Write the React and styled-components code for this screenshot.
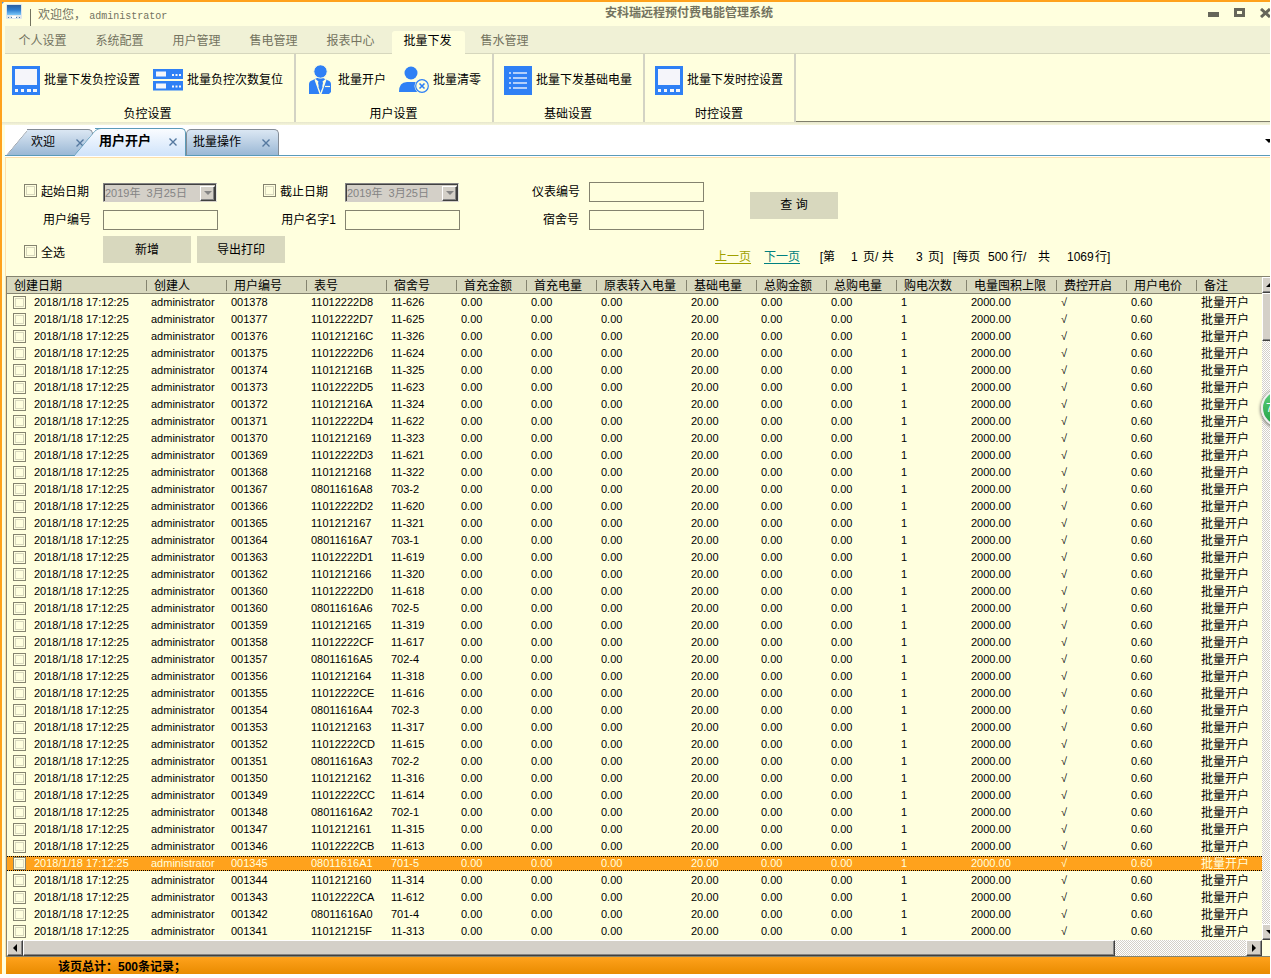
import React from "react";
import styled, { createGlobalStyle, css } from "styled-components";

const GlobalStyle = createGlobalStyle`
  * {
    box-sizing: border-box;
  }
  body {
    margin: 0;
    background: #fff;
    color: #000;
    font-family: "Liberation Sans", "Noto Sans CJK SC", sans-serif;
    font-size: 12px;
    line-height: 16px;
  }
  button, input {
    font: inherit;
    color: inherit;
    margin: 0;
    padding: 0;
    border: 0;
    border-radius: 0;
  }
  svg {
    display: block;
    flex: none;
  }
`;

const Window = styled.div`
  position: relative;
  margin: 0 1px 4px 0;
  border-top: 2px solid #ffa21c;
  border-left: 2px solid #ffa21c;
  background: #ffffde;
  overflow: hidden;
`;

/* title bar */

const TitleBar = styled.header`
  display: grid;
  grid-template-columns: 602fr auto 496fr;
  height: 24px;
  color: #73735f;
`;

const Welcome = styled.div`
  display: flex;
  align-items: flex-start;
  padding: 2px 0 0 4px;
`;

const WelcomeText = styled.div`
  margin: 5px 0 0 8px;
  padding-left: 7px;
  border-left: 1px solid #73735f;
  height: 17px;
  line-height: 12px;
  white-space: pre;
`;

const UserName = styled.span`
  font-family: "Liberation Mono", monospace;
  font-size: 10px;
`;

const AppTitle = styled.h1`
  margin: 0;
  font-size: 12px;
  line-height: 23px;
  font-weight: bold;
`;

const WindowButtons = styled.div`
  display: flex;
  justify-content: flex-end;
  align-items: flex-start;
  gap: 15px;
  padding-top: 6px;
  margin-right: -1px;
`;

const WindowButton = styled.button`
  width: 11px;
  height: 10px;
  background: none;
`;

/* ribbon */

const MenuTabs = styled.nav`
  display: flex;
  align-items: flex-end;
  gap: 4px;
  height: 28px;
  margin-left: 3px;
  padding-left: 2px;
  background: #f0f1d6;
  border-bottom: 1px solid #d6d7bd;
`;

const MenuTab = styled.button`
  width: 73px;
  height: 23px;
  margin-bottom: -1px;
  padding: 0 2px 4px 0;
  line-height: 18px;
  background: none;
  color: #73735f;
  border-radius: 3px 3px 0 0;

  ${({ $active }) => $active && css`
    background: #ffffde;
    color: #000;
  `}
`;

const Ribbon = styled.div`
  display: flex;
  height: 68px;
`;

const RibbonGroup = styled.section`
  display: flex;
  flex-direction: column;
  justify-content: space-between;
  padding: 11px 11px 0 10px;
  border-right: 2px solid #d3d3c4;
`;

const RibbonItems = styled.div`
  display: flex;
  gap: 13px;
`;

const RibbonButton = styled.button`
  display: flex;
  align-items: center;
  gap: 4px;
  height: 30px;
  background: none;
  white-space: nowrap;
`;

const GroupName = styled.div`
  text-align: center;
  line-height: 16px;
`;

const RibbonRest = styled.div`
  flex: 1;
  border-bottom: 1px solid #807f6c;
`;

const RibbonShadow = styled.div`
  height: 3px;
  background: linear-gradient(#e6e6cc, #f6f6dc);
`;

/* document tabs */

const DocTabs = styled.div`
  position: relative;
  z-index: 0;
  display: flex;
  align-items: flex-end;
  height: 31px;
  margin-left: 3px;
  background: #fff;
  border-bottom: 1px solid #5b9bb8;
`;

const DocTab = styled.div`
  position: relative;
  display: flex;
  align-items: center;
  justify-content: space-between;
  width: ${({ $width }) => $width}px;
  height: 26px;
  padding: 0 8px 1px ${({ $slant }) => ($slant ? 4 : 6)}px;
  margin-left: ${({ $slant }) => $slant || 0}px;
  border: 1px solid #848c96;
  border-width: 1px 1px 0 ${({ $slant }) => ($slant ? 0 : 1)}px;
  border-radius: ${({ $slant }) => ($slant ? 0 : 5)}px 5px 0 0;
  background: linear-gradient(#dbe7f3, #9bb8d5);

  ${({ $active }) => $active && css`
    z-index: 1;
    height: 28px;
    margin-bottom: -1px;
    padding-bottom: 3px;
    border-color: #5b9bb8;
    background: linear-gradient(#fafcff, #cfe3fa);
    font-size: 13px;
    font-weight: bold;
  `}

  ${({ $slant }) => $slant && css`
    &::before {
      content: "";
      position: absolute;
      z-index: -1;
      top: -1px;
      bottom: 0;
      left: -10px;
      width: 22px;
      border: inherit;
      border-width: 1px 0 0 1px;
      border-top-left-radius: 5px;
      background: inherit;
      transform: skewX(-40deg);
    }
  `}
`;

const TabClose = styled.button`
  width: 8px;
  height: 8px;
  margin-top: 2px;
  background: none;
`;

const TabsMenu = styled.button`
  align-self: center;
  width: 5px;
  height: 6px;
  margin-left: auto;
  background: none;
  overflow: hidden;
`;

/* filters */

const Content = styled.main`
  margin-left: 3px;
  border-top: 1px solid #fff;
`;

const Panel = styled.div`
  border-top: 1px solid #fde0ab;
  border-left: 1px solid #fde0ab;
`;

const Filters = styled.form`
  display: grid;
  grid-template-columns: 79px 115px 45px 82px 115px 72px 57px 115px 46px 88px;
  grid-template-rows: 20px 20px;
  row-gap: 8px;
  align-items: center;
  padding: 24px 0 0 18px;
`;

const FieldLabel = styled.label`
  grid-column: ${({ $col }) => $col};
  padding-right: ${({ $pad }) => $pad || 12}px;
  text-align: right;
  white-space: nowrap;
`;

const CheckBox = styled.input.attrs({ type: "checkbox" })`
  appearance: none;
  flex: none;
  width: 13px;
  height: 13px;
  border: 1px solid #84836f;
  background: #ffffde;
  outline: 1px solid #d8d8be;
  outline-offset: -3px;

  &:checked {
    background: #84836f;
  }
`;

const CheckLabel = styled.label`
  grid-column: ${({ $col }) => $col};
  display: flex;
  align-items: center;
  gap: 4px;
  white-space: nowrap;

  ${CheckBox} {
    margin-bottom: 3px;
  }
`;

const TextBox = styled.input`
  grid-column: ${({ $col }) => $col};
  width: 115px;
  height: 20px;
  padding: 0 3px;
  border: 1px solid #84836f;
  background: #ffffde;
`;

const DatePicker = styled.div`
  grid-column: ${({ $col }) => $col};
  display: flex;
  width: 114px;
  height: 19px;
  border: 1px solid #848484;
  border-color: #848484 #e8e8e0 #d4d0c8 #848484;
  box-shadow: inset 1px 1px #404040, inset -1px 0 #404040;
  background: #d4d0c8;
  padding: 2px 1px 1px 1px;
`;

const DateText = styled.input`
  flex: 1;
  min-width: 0;
  background: none;
  color: #848484;
  font-size: 11px;
  white-space: pre;
`;

const bevel = css`
  background: #d4d0c8;
  border: 1px solid;
  border-color: #fff #404040 #404040 #fff;
  box-shadow: inset -1px -1px #848484;
`;

const DateButton = styled.button`
  ${bevel};
  display: grid;
  place-items: center;
  width: 15px;
  height: 15px;
`;

const PushButton = styled.button`
  width: 88px;
  height: 27px;
  background: #d8d8be;
  white-space: pre;
`;

const SearchButton = styled(PushButton)`
  grid-column: 10;
  grid-row: 1 / span 2;
  align-self: center;
  margin-bottom: 2px;
`;

const Actions = styled.div`
  display: flex;
  align-items: flex-start;
  height: 46px;
  padding: 6px 0 0 18px;
`;

const SelectAll = styled(CheckLabel)`
  width: 79px;
  height: 34px;
`;

const ActionButtons = styled.div`
  display: flex;
  gap: 6px;
`;

const Pager = styled.div`
  display: flex;
  margin: 12px 0 0 430px;
  line-height: 18px;
  white-space: pre;
`;

const PageLink = styled.a`
  width: 49px;
  color: ${({ $disabled }) => ($disabled ? "#a0a000" : "#008080")};
  text-decoration: underline;
  text-underline-offset: 2px;
`;

const PagerText = styled.span`
  width: ${({ $width }) => $width}px;
`;

/* grid */

const GridBox = styled.div`
  border: 1px solid #84836f;
  border-width: 0 0 1px 1px;
`;

const GridBody = styled.div`
  display: flex;
`;

const Table = styled.table`
  flex: 1;
  width: 0;
  table-layout: fixed;
  border-collapse: separate;
  border-spacing: 0;
`;

const HeadCell = styled.th`
  height: 18px;
  padding: 3px 0 0 7px;
  border: 1px solid #84836f;
  border-width: 1px 0;
  background: linear-gradient(#84836f, #84836f) right 3px / 1px 11px no-repeat #d8d8be;
  line-height: 13px;
  font-weight: normal;
  text-align: left;
  white-space: nowrap;

  &:last-child {
    background: #d8d8be;
  }
`;

const Row = styled.tr`
  ${({ $selected }) => $selected && css`
    color: #ffffde;
    background:
      repeating-linear-gradient(90deg, #000 0 1px, #ffa21c 1px 2px) 0 1px / 100% 1px no-repeat,
      repeating-linear-gradient(90deg, #000 0 1px, #ffa21c 1px 2px) 0 15px / 100% 1px no-repeat,
      linear-gradient(#ffa21c, #ffa21c) 0 1px / 100% 15px no-repeat;
  `}
`;

const Cell = styled.td`
  height: 17px;
  padding: 0 0 0 4px;
  font-size: 11px;
  line-height: 17px;
  white-space: nowrap;
  overflow: hidden;
`;

const NoteCell = styled(Cell)`
  padding-top: 1px;
  font-size: 12px;
  line-height: 16px;
`;

const DateCell = styled.label`
  display: flex;
  align-items: center;
  gap: 8px;
  height: 17px;
  padding-left: 2px;
`;

const track = css`
  background: repeating-conic-gradient(#d4d0c8 0 25%, #fff 0 50%) 0 0 / 2px 2px;
`;

const VScroll = styled.div`
  ${track};
  display: flex;
  flex-direction: column;
  width: 8px;
  overflow: hidden;
  border-top: 1px solid #84836f;
`;

const HScroll = styled.div`
  ${track};
  display: flex;
  height: 16px;
  margin-right: 8px;
`;

const ScrollButton = styled.button`
  ${bevel};
  display: grid;
  place-items: center;
  flex: none;
  width: 16px;
  height: 16px;

  &:last-child {
    margin-top: auto;
  }
`;

const VThumb = styled.div`
  ${bevel};
  width: 16px;
  height: 48px;
`;

const HThumb = styled.div`
  ${bevel};
  width: 87%;
  margin-right: auto;
`;

const StatusBar = styled.footer`
  height: 17px;
  margin-left: 1px;
  padding-left: 52px;
  background: linear-gradient(#ffa21c, #e98b00);
  font-weight: bold;
  line-height: 20px;
`;

const SideBadge = styled.button`
  position: absolute;
  top: 387px;
  right: -29px;
  width: 38px;
  height: 38px;
  padding-left: 3px;
  border: 2px solid #efefef;
  border-radius: 50%;
  box-shadow: 0 1px 3px 1px #8b8b80;
  background: linear-gradient(#5fd07c, #1fa043);
  color: #fff;
  text-align: left;
`;

const CornerMark = styled.svg`
  position: absolute;
  top: -2px;
  left: -2px;
`;

const BLUE = "#2f80f5";

function MonitorIcon() {
  return (
    <svg width="28" height="29" viewBox="0 0 28 29">
      <path fill={BLUE} d="M0 0h28v29H0z" />
      <path fill="#f5f5fa" d="M3 3h22v16H3zM3 23h3v3H3zM9 23h3v3H9zM15 23h4v3h-4zM21 23h4v3h-4z" />
    </svg>
  );
}

function ServerIcon() {
  return (
    <svg width="30" height="22" viewBox="0 0 30 22">
      <path fill={BLUE} d="M0 0h30v10H0zM0 12h30v9.500H0z" />
      <path fill="#f5f5fa" d="M3 2.500h10v5H3zM3 14.500h10v5H3zM19 5h2v2h-2zM22.500 5h2v2h-2zM26 5h2v2h-2zM19 16.500h2v2h-2zM22.500 16.500h2v2h-2zM26 16.500h2v2h-2z" />
    </svg>
  );
}

function ManagerIcon() {
  return (
    <svg width="28" height="30" viewBox="-3 0 28 30">
      <path fill={BLUE} d="M0 29V19q0-3 4-4l4-2h6l4 2q4 1 4 4v8l-2 2z" />
      <circle cx="11.500" cy="6.500" r="6.700" fill={BLUE} stroke="#ffffde" />
      <path fill="#ffffde" d="M6.500 14l3 2.500-.5 1.500 2.500 10 2.500-10-.5-1.500 3-2.500 1 .8L12.500 29h-2L5.500 14.800z" />
      <path fill={BLUE} d="M10 14h3l-.7 2.500 1.200 6-2 4-2-4 1.200-6z" />
      <path stroke="#ffffde" strokeWidth="1.200" d="M16 21.500h5" />
    </svg>
  );
}

function UserClearIcon() {
  return (
    <svg width="30" height="28" viewBox="0 0 30 28">
      <circle cx="12" cy="7" r="6.500" fill={BLUE} />
      <path fill={BLUE} d="M0 26q0-10 8-10h8q3 0 5 2v8z" />
      <circle cx="23" cy="20" r="7.500" fill="#ffffde" />
      <circle cx="23" cy="20" r="6.300" fill="none" stroke={BLUE} strokeWidth="1.200" />
      <path stroke={BLUE} strokeWidth="1.600" d="M20.500 17.500l5 5M25.500 17.500l-5 5" />
    </svg>
  );
}

function ListIcon() {
  return (
    <svg width="28" height="29" viewBox="0 0 28 29">
      <path fill={BLUE} d="M0 0h28v29H0z" />
      <path stroke="#dfe9fb" strokeWidth="1.500" d="M5 7h2M9 7h14M5 12h2M9 12h14M5 17h2M9 17h14M5 22h2M9 22h14" />
    </svg>
  );
}

function LogoIcon() {
  return (
    <svg width="16" height="16" viewBox="0 0 16 16">
      <defs>
        <linearGradient id="logo-screen" x1="0" y1="0" x2="0" y2="1">
          <stop offset="0" stopColor="#2a5fa0" />
          <stop offset=".5" stopColor="#2f7fd0" />
          <stop offset="1" stopColor="#7cc8f8" />
        </linearGradient>
      </defs>
      <rect width="16" height="15" rx="1" fill="#dfe6ea" />
      <path fill="url(#logo-screen)" d="M1 1h14v10H1z" />
      <path fill="#4d7fa8" d="M2 13h1v1H2zM5 13h1v1H5zM10 13h1v1h-1zM13 13h1v1h-1z" />
      <path fill="#fff" d="M6 12h4v2H6z" />
    </svg>
  );
}

function Arrow({ dir, color = "#000" }) {
  const paths = {
    up: "M0 6L4 2l4 4z",
    down: "M0 2h8L4 6z",
    left: "M6 0v8L2 4z",
    right: "M2 0v8l4-4z",
  };
  return (
    <svg width="8" height="8" viewBox="0 0 8 8">
      <path fill={color} d={paths[dir]} />
    </svg>
  );
}

const menus = ["个人设置", "系统配置", "用户管理", "售电管理", "报表中心", "批量下发", "售水管理"];

const ribbonGroups = [
  { name: "负控设置", items: [["批量下发负控设置", MonitorIcon], ["批量负控次数复位", ServerIcon]] },
  { name: "用户设置", items: [["批量开户", ManagerIcon], ["批量清零", UserClearIcon]] },
  { name: "基础设置", items: [["批量下发基础电量", ListIcon]] },
  { name: "时控设置", items: [["批量下发时控设置", MonitorIcon]] },
];

const docTabs = [
  { name: "欢迎", width: 66, slant: 22 },
  { name: "用户开户", width: 91, slant: 2, active: true },
  { name: "批量操作", width: 93 },
];

const columns = [
  ["创建日期", 140],
  ["创建人", 80],
  ["用户编号", 80],
  ["表号", 80],
  ["宿舍号", 70],
  ["首充金额", 70],
  ["首充电量", 70],
  ["原表转入电量", 90],
  ["基础电量", 70],
  ["总购金额", 70],
  ["总购电量", 70],
  ["购电次数", 70],
  ["电量囤积上限", 90],
  ["费控开启", 70],
  ["用户电价", 70],
  ["备注", null],
];

const Col = styled.col`
  width: ${({ $width }) => ($width ? `${$width}px` : "auto")};
`;

// user number, meter number, room
const accounts = [
  ["001378", "11012222D8", "11-626"],
  ["001377", "11012222D7", "11-625"],
  ["001376", "110121216C", "11-326"],
  ["001375", "11012222D6", "11-624"],
  ["001374", "110121216B", "11-325"],
  ["001373", "11012222D5", "11-623"],
  ["001372", "110121216A", "11-324"],
  ["001371", "11012222D4", "11-622"],
  ["001370", "1101212169", "11-323"],
  ["001369", "11012222D3", "11-621"],
  ["001368", "1101212168", "11-322"],
  ["001367", "08011616A8", "703-2"],
  ["001366", "11012222D2", "11-620"],
  ["001365", "1101212167", "11-321"],
  ["001364", "08011616A7", "703-1"],
  ["001363", "11012222D1", "11-619"],
  ["001362", "1101212166", "11-320"],
  ["001360", "11012222D0", "11-618"],
  ["001360", "08011616A6", "702-5"],
  ["001359", "1101212165", "11-319"],
  ["001358", "11012222CF", "11-617"],
  ["001357", "08011616A5", "702-4"],
  ["001356", "1101212164", "11-318"],
  ["001355", "11012222CE", "11-616"],
  ["001354", "08011616A4", "702-3"],
  ["001353", "1101212163", "11-317"],
  ["001352", "11012222CD", "11-615"],
  ["001351", "08011616A3", "702-2"],
  ["001350", "1101212162", "11-316"],
  ["001349", "11012222CC", "11-614"],
  ["001348", "08011616A2", "702-1"],
  ["001347", "1101212161", "11-315"],
  ["001346", "11012222CB", "11-613"],
  ["001345", "08011616A1", "701-5"],
  ["001344", "1101212160", "11-314"],
  ["001343", "11012222CA", "11-612"],
  ["001342", "08011616A0", "701-4"],
  ["001341", "110121215F", "11-313"],
];

const amounts = ["0.00", "0.00", "0.00", "20.00", "0.00", "0.00", "1", "2000.00", "√", "0.60"];

function DateField({ col, id }) {
  return (
    <DatePicker $col={col}>
      <DateText id={id} aria-label="日期" disabled defaultValue="2019年  3月25日" />
      <DateButton type="button" disabled aria-label="选择日期">
        <Arrow dir="down" color="#848484" />
      </DateButton>
    </DatePicker>
  );
}

function FilterForm() {
  return (
    <Filters>
      <CheckLabel $col={1}><CheckBox />起始日期</CheckLabel>
      <DateField col={2} id="start" />
      <CheckLabel $col={4}><CheckBox />截止日期</CheckLabel>
      <DateField col={5} id="end" />
      <FieldLabel $col={7} $pad={10} htmlFor="meter">仪表编号</FieldLabel>
      <TextBox $col={8} id="meter" />
      <FieldLabel $col={1} htmlFor="user-no">用户编号</FieldLabel>
      <TextBox $col={2} id="user-no" />
      <FieldLabel $col={4} $pad={9} htmlFor="user-name">用户名字1</FieldLabel>
      <TextBox $col={5} id="user-name" />
      <FieldLabel $col={7} $pad={10} htmlFor="room">宿舍号</FieldLabel>
      <TextBox $col={8} id="room" />
      <SearchButton type="button">查 询</SearchButton>
    </Filters>
  );
}

function ActionBar() {
  return (
    <Actions>
      <SelectAll><CheckBox />全选</SelectAll>
      <ActionButtons>
        <PushButton>新增</PushButton>
        <PushButton>导出打印</PushButton>
      </ActionButtons>
      <Pager>
        <PageLink href="#prev" $disabled>上一页</PageLink>
        <PageLink href="#next">下一页</PageLink>
        <PagerText $width={38}>{"  ["}第</PagerText>
        <PagerText $width={12}>1</PagerText>
        <PagerText $width={53}>页/ 共</PagerText>
        <PagerText $width={12}>3</PagerText>
        <PagerText $width={25}>页]</PagerText>
        <PagerText $width={35}>[每页</PagerText>
        <PagerText $width={23}>500</PagerText>
        <PagerText $width={27}>行/</PagerText>
        <PagerText $width={29}>共</PagerText>
        <PagerText $width={28}>1069</PagerText>
        <span>行]</span>
      </Pager>
    </Actions>
  );
}

function AccountTable() {
  return (
    <Table>
      <colgroup>
        {columns.map(([name, width]) => <Col key={name} $width={width} />)}
      </colgroup>
      <thead>
        <tr>
          {columns.map(([name]) => <HeadCell key={name}>{name}</HeadCell>)}
        </tr>
      </thead>
      <tbody>
        {accounts.map(([userNo, meter, room]) => (
          <Row key={meter} $selected={userNo === "001345"}>
            <Cell>
              <DateCell><CheckBox />2018/1/18 17:12:25</DateCell>
            </Cell>
            <Cell>administrator</Cell>
            <Cell>{userNo}</Cell>
            <Cell>{meter}</Cell>
            <Cell>{room}</Cell>
            {amounts.map((value, i) => <Cell key={i}>{value}</Cell>)}
            <NoteCell>批量开户</NoteCell>
          </Row>
        ))}
      </tbody>
    </Table>
  );
}

function App() {
  return (
    <Window>
      <GlobalStyle />
      <CornerMark width="6" height="6" viewBox="0 0 6 6">
        <path fill="#4a90e8" d="M0 0h6L0 6z" />
        <path stroke="#fff" strokeDasharray="1 1" d="M1 5V3l2-2h2" fill="none" />
      </CornerMark>
      <TitleBar>
        <Welcome>
          <LogoIcon />
          <WelcomeText>欢迎您， <UserName>administrator</UserName></WelcomeText>
        </Welcome>
        <AppTitle>安科瑞远程预付费电能管理系统</AppTitle>
        <WindowButtons>
          <WindowButton aria-label="最小化">
            <svg width="11" height="10"><path fill="#66665a" d="M0 4h11v5H0z" /></svg>
          </WindowButton>
          <WindowButton aria-label="最大化">
            <svg width="11" height="10"><path fill="#66665a" fillRule="evenodd" d="M0 0h11v9H0zM3 3v3h5V3z" /></svg>
          </WindowButton>
          <WindowButton aria-label="关闭">
            <svg width="11" height="10"><path stroke="#66665a" strokeWidth="3" d="M1 1l9 8M10 1L1 9" /></svg>
          </WindowButton>
        </WindowButtons>
      </TitleBar>

      <MenuTabs>
        {menus.map((name) => (
          <MenuTab key={name} $active={name === "批量下发"}>{name}</MenuTab>
        ))}
      </MenuTabs>

      <Ribbon>
        {ribbonGroups.map(({ name, items }) => (
          <RibbonGroup key={name}>
            <RibbonItems>
              {items.map(([label, Icon]) => (
                <RibbonButton key={label}><Icon />{label}</RibbonButton>
              ))}
            </RibbonItems>
            <GroupName>{name}</GroupName>
          </RibbonGroup>
        ))}
        <RibbonRest />
      </Ribbon>
      <RibbonShadow />

      <DocTabs>
        {docTabs.map(({ name, width, slant, active }) => (
          <DocTab key={name} $width={width} $slant={slant} $active={active}>
            {name}
            <TabClose aria-label="关闭">
              <svg width="8" height="8"><path stroke="#54789f" strokeWidth="1.400" d="M.5 .5l7 7M7.500 .5l-7 7" /></svg>
            </TabClose>
          </DocTab>
        ))}
        <TabsMenu aria-label="更多"><Arrow dir="down" /></TabsMenu>
      </DocTabs>

      <Content>
        <Panel>
          <FilterForm />
          <ActionBar />
          <GridBox>
            <GridBody>
              <AccountTable />
              <VScroll>
                <ScrollButton aria-label="向上"><Arrow dir="up" /></ScrollButton>
                <VThumb />
                <ScrollButton aria-label="向下"><Arrow dir="down" /></ScrollButton>
              </VScroll>
            </GridBody>
            <HScroll>
              <ScrollButton aria-label="向左"><Arrow dir="left" /></ScrollButton>
              <HThumb />
              <ScrollButton aria-label="向右"><Arrow dir="right" /></ScrollButton>
            </HScroll>
          </GridBox>
        </Panel>
        <StatusBar>该页总计：500条记录；</StatusBar>
      </Content>
      <SideBadge aria-label="助手">7</SideBadge>
    </Window>
  );
}

export default App;
